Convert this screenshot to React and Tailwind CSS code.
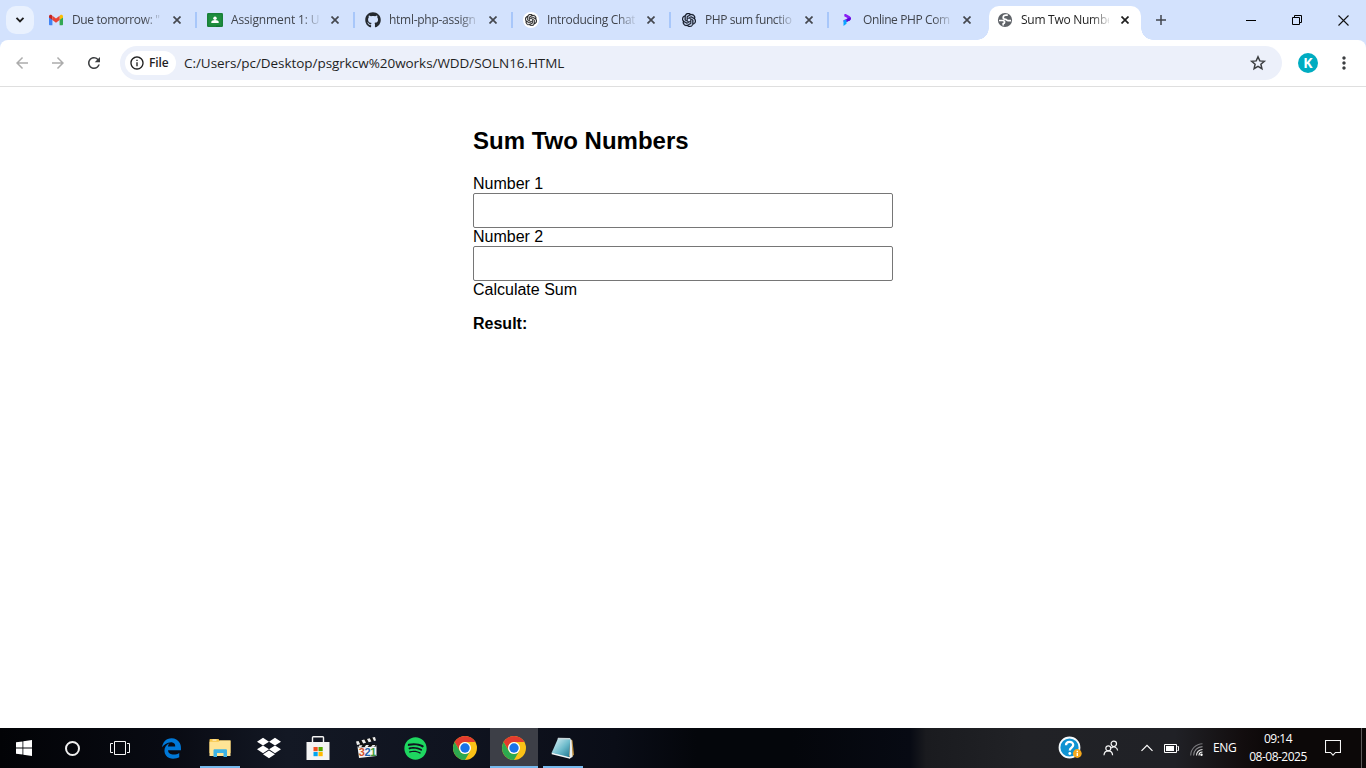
import { MdArrowBack, MdArrowForward, MdRefresh, MdInfoOutline, MdMoreVert } from "react-icons/md";
import { SiOpenai } from "react-icons/si";
import { FaEdgeLegacy, FaGithub, FaDropbox, FaSpotify } from "react-icons/fa6";

function Gmail() {
  return (
    <svg viewBox="0 0 16 16" className="size-4">
      <path d="M0 5v7.2c0 .7.5 1.1 1.1 1.1h2.3V7.2z" fill="#4285f4" />
      <path d="M14 5v7.2c0 .7-.5 1.1-1.1 1.1h-2.3V7.2z" fill="#34a853" />
      <path d="M0 4.4v1L3.4 8V4L2.6 3.1C1.500 2.300 0 3 0 4.400z" fill="#c5221f" />
      <path d="M14 4.400v1L10.600 8V4l.8-.9C12.500 2.300 14 3 14 4.400z" fill="#fbbc04" />
      <path d="M3.4 3.700 7 6.500l3.600-2.800V8L7 10.700 3.400 8z" fill="#ea4335" />
    </svg>
  );
}

function Classroom() {
  return (
    <svg viewBox="0 0 16 16" className="size-4">
      <rect y="1" width="16" height="14" rx="1.200" fill="#188038" />
      <rect x="1.500" y="2.500" width="13" height="11" fill="#1e8e3e" />
      <circle cx="8" cy="6.200" r="1.700" fill="#fff" />
      <path d="M4.300 11V10c0-1.200 2-1.900 3.700-1.900s3.700.7 3.700 1.900v1z" fill="#fff" />
      <path d="M9 13.500h4v1.500H9z" fill="#137333" />
    </svg>
  );
}

function Programiz() {
  return (
    <svg viewBox="0 0 16 16" className="size-4">
      <path d="M5.500 2h1.300l4 2.300c1.500 1 1.600 2.900.2 3.900L8 9.800H4.500V8.200L8.800 6.300 5.200 4.200z" fill="#8a1cf5" />
      <path d="M8.800 6.300 11.800 5.500c.2 1.200 0 2.100-.8 2.700L8 9.800H5.500z" fill="#5a0bd8" />
      <path d="M4.500 8.300 7.500 8v3.800L4.500 14z" fill="#0aa5ff" />
    </svg>
  );
}

function Globe() {
  return (
    <svg viewBox="0 0 16 16" className="size-4">
      <circle cx="8" cy="8" r="7.100" fill="#5f6368" />
      <path d="M10.800 3.200H9C7.200 3.200 6.200 4 6.200 5.400S7.500 7.300 8.700 7.400c1 .1 1.300 1.200 2.300 1.200h3" fill="none" stroke="#fff" strokeWidth="1.700" />
      <path d="M2 8.500h3.600c1.400 0 2 .7 2 1.700s-.8 1.300-1.400 1.400v1.900" fill="none" stroke="#fff" strokeWidth="1.700" />
    </svg>
  );
}

function Star() {
  return (
    <svg viewBox="0 0 18 18" className="ml-auto mr-[15px] size-[18px]">
      <path
        d="M9 2.800l1.800 4.100 4.500.4-3.400 2.950 1 4.400L9 12.300l-3.900 2.350 1-4.400L2.700 7.300l4.500-.4z"
        fill="none"
        stroke="#3c3e41"
        strokeWidth="1.500"
      />
    </svg>
  );
}

function Close({ dark }) {
  return (
    <svg viewBox="0 0 8 8" className="size-2 shrink-0">
      <path d="M.5.5l7 7m0-7l-7 7" stroke={dark ? "#1f1f1f" : "#45484f"} strokeWidth="1.700" />
    </svg>
  );
}

function OpenAIRound() {
  return (
    <span className="flex size-4 items-center justify-center rounded-full bg-white">
      <SiOpenai className="size-3 text-[#222]" stroke="currentColor" strokeWidth="0.6" />
    </span>
  );
}

const tabs = [
  { icon: <Gmail />, title: 'Due tomorrow: "', look: "tracking-[-0.37px]" },
  { icon: <Classroom />, title: "Assignment 1: U", look: "pl-px tracking-[-0.14px]" },
  { icon: <FaGithub className="size-4 text-[#24292f]" />, title: "html-php-assign", look: "pl-px tracking-[-0.27px]" },
  { icon: <OpenAIRound />, title: "Introducing Chat", look: "pl-px tracking-[-0.32px]" },
  { icon: <SiOpenai className="ml-px size-3.5 text-[#111827]" stroke="currentColor" strokeWidth="0.6" />, title: "PHP sum functio", look: "pl-px tracking-[-0.42px]" },
  { icon: <Programiz />, title: "Online PHP Com", look: "pl-px tracking-[-0.4px]" },
];

function TabBody({ icon, title, look, active }) {
  return (
    <>
      <span className="flex size-4 shrink-0 items-center">{icon}</span>
      <span
        className={
          "ml-[7px] w-[89px] shrink-0 whitespace-nowrap text-[12px] leading-4 [mask-image:linear-gradient(to_right,#000_80%,#0002)] " +
          look +
          (active ? " text-[#1f1f1f]" : " text-[#41454d]")
        }
      >
        {title}
      </span>
      <span className="ml-3 flex">
        <Close dark={active} />
      </span>
    </>
  );
}

function TabStrip() {
  return (
    <div className="flex h-10 bg-[#d3e2fd]">
      <button className="ml-1.5 mt-1.5 flex size-7 items-center justify-center rounded-[10px] bg-[#e9f1fe]">
        <svg viewBox="0 0 10 6" className="h-1.5 w-2.5">
          <path d="M1.500 .8 5 4.300 8.500 .8" fill="none" stroke="#1f1f1f" strokeWidth="1.900" />
        </svg>
      </button>
      <div className="ml-1 flex">
        {tabs.map((t, i) => (
          <div key={t.title} className={"flex h-10 items-center pl-[11px] " + (i < 5 ? "w-[158px]" : "w-[149px]")}>
            <TabBody {...t} />
            {i < 5 && <span className="ml-auto mr-[-1px] h-4 w-0.5 bg-[#a8c7fa]" />}
          </div>
        ))}
      </div>
      <span className="size-3 self-end bg-[radial-gradient(circle_at_0_0,#d3e2fd_11.5px,#fff_12px)]" />
      <div className="mt-1.5 flex w-[152px] items-center rounded-t-[10px] bg-white pl-2 pb-1.5">
        <TabBody icon={<Globe />} title="Sum Two Numbe" look="pl-px tracking-[-0.27px]" active />
      </div>
      <span className="size-3 self-end bg-[radial-gradient(circle_at_100%_0,#d3e2fd_11.5px,#fff_12px)]" />
      <svg viewBox="0 0 10 10" className="ml-[3px] mt-[15px] size-2.5">
        <path d="M5 0v10M0 5h10" stroke="#41454d" strokeWidth="1.500" />
      </svg>
      <div className="ml-auto flex h-10 items-center text-black">
        <span className="mr-[36px] h-px w-2.5 bg-black" />
        <svg viewBox="0 0 10 10" className="mr-[36px] size-2.5">
          <path d="M.5 2.500h7v7h-7zM2.500 2.500v-2h7v7h-2" fill="none" stroke="#000" />
        </svg>
        <svg viewBox="0 0 11 11" className="mr-[17px] size-[11px]">
          <path d="M.5.5l10 10m0-10l-10 10" stroke="#111" strokeWidth="1.100" />
        </svg>
      </div>
    </div>
  );
}

function Toolbar() {
  return (
    <div className="bg-[#d3e2fd]">
      <div className="flex h-[47px] items-center rounded-t-lg border-b border-[#dfdfdf] bg-white">
        <MdArrowBack className="ml-[13px] size-[18px] text-[#acacac]" />
        <MdArrowForward className="ml-[18px] size-[18px] text-[#acacac]" />
        <MdRefresh className="ml-[18px] size-[18px] text-[#3c3e41]" />
        <div className="ml-[17px] flex h-[34px] w-[1162px] items-center rounded-full bg-[#ecf0fa]">
          <div className="ml-[5px] flex h-6 w-[51px] items-center rounded-full bg-white">
            <MdInfoOutline className="ml-1 size-4 text-[#1f1f1f]" />
            <span className="ml-1 text-[12px] font-semibold tracking-[-0.1px] text-[#1f1f1f]">File</span>
          </div>
          <span className="ml-2 whitespace-nowrap text-[13.5px] leading-5 tracking-[-0.05px] text-[#1f1f1f]">
            C:/Users/pc/Desktop/psgrkcw%20works/WDD/SOLN16.HTML
          </span>
          <Star />
        </div>
        <span className="ml-4 flex size-5 items-center justify-center rounded-full bg-[#00acc1] text-[14px] leading-5 font-bold text-white">
          K
        </span>
        <MdMoreVert className="ml-4 size-5 text-[#3c3e41]" />
      </div>
    </div>
  );
}

function Page() {
  return (
    <main className="flex-1 bg-white font-['Liberation_Sans',Arial,sans-serif] text-base leading-[18px] text-black">
      <div className="mx-auto w-[420px] pt-10">
        <h2 className="mb-[21px] text-2xl leading-[27px] font-bold">Sum Two Numbers</h2>
        <label className="block">Number 1</label>
        <input className="block h-[35px] w-full rounded-[2px] border border-[#767676] bg-white" />
        <label className="block">Number 2</label>
        <input className="block h-[35px] w-full rounded-[2px] border border-[#767676] bg-white" />
        <div>Calculate Sum</div>
        <div className="mt-4 font-bold">Result:</div>
      </div>
    </main>
  );
}

function ChromeLogo() {
  return (
    <svg viewBox="0 0 24 24" className="size-6">
      <circle cx="12" cy="12" r="12" fill="#fbc116" />
      <path d="M1.610 6A12 12 0 0 1 22.390 6H12A6 6 0 0 0 6.800 15z" fill="#e33b2e" />
      <path d="M1.610 6A12 12 0 0 0 12 24L17.200 15A6 6 0 0 1 6.800 15z" fill="#2da94f" />
      <circle cx="12" cy="12" r="6" fill="#fff" />
      <circle cx="12" cy="12" r="4.700" fill="#1a73e8" />
    </svg>
  );
}

function Explorer() {
  return (
    <svg viewBox="0 0 22 20" className="h-5 w-[22px]">
      <path d="M.5 2c0-.6.3-1 .9-1H9.500l1 1.500H21.500V15H.5z" fill="#f7c64a" />
      <path d="M3.500 1.600h4v.9h-4z" fill="#fff" />
      <path d="M.5 3.700h9l1.500-1.200h10.500V18H.5z" fill="#ffe495" />
      <path d="M4.500 19v-6.500c0-.7.4-1.200 1.200-1.200h11c.8 0 1.300.5 1.300 1.200V19h-3.500v-4H8v4z" fill="#3cb3e6" />
    </svg>
  );
}

function Store() {
  return (
    <svg viewBox="0 0 24 24" className="size-6">
      <path d="M6.500 6V1.500C6.500.9 6.900.7 7.300.7h9.400c.4 0 .8.200.8.800V6" fill="none" stroke="#f4f4f4" strokeWidth="1.400" />
      <path d="M.5 6h23v18h-23z" fill="#f4f4f4" />
      <path d="M7.500 11H11.700v4.200H7.500z" fill="#f25022" />
      <path d="M12.500 11h4.200v4.200h-4.200z" fill="#56a800" />
      <path d="M7.500 16H11.700v4.200H7.500z" fill="#00a4ef" />
      <path d="M12.500 16h4.200v4.200h-4.200z" fill="#ffb900" />
    </svg>
  );
}

function Clapper() {
  return (
    <svg viewBox="0 0 24 24" className="size-6">
      <path d="M2.500 10.500 21.500 9v11L4 22z" fill="#f5f5f5" />
      <path d="M3 8h18.500v2.500L3 11.500z" fill="#111" />
      <path d="M1 5.500 20 1l1 3.500L2 9z" fill="#111" />
      <path d="M1 5.500l2.500-.6 1.700 3.300-3.200.8zM6.500 4.200l2.800-.7 1.700 3.300-2.800.7zM12 2.900l2.800-.7 1.600 3.300-2.700.7zM17.400 1.600l2.600-.6 1 3.500-2 .500zM3 11.500l1.500-2.300h3L6 11.500zM9.500 11.200 11 9h3l-1.500 2.100zM16 11 17.500 9h3L19 10.800z" fill="#eee" />
      <g fontFamily="Liberation Sans, Arial, sans-serif" fontWeight="700" fontSize="11">
        <text x="3.800" y="20.300" fill="#d5532b">3</text>
        <text x="9.600" y="20" fill="#1f62ad">2</text>
        <text x="15.300" y="19.500" fill="#3f9a3c">1</text>
      </g>
    </svg>
  );
}

function Notepad() {
  return (
    <svg viewBox="0 0 24 24" className="size-6">
      <defs>
        <linearGradient id="pad" x1="0" y1="0" x2="1" y2="1">
          <stop offset="0" stopColor="#e4f5f9" />
          <stop offset=".55" stopColor="#6fbccc" />
          <stop offset="1" stopColor="#1d7690" />
        </linearGradient>
      </defs>
      <path d="M19.500 3l2 1.500L23 18.500l-2 2.500-3-1z" fill="#b98b3c" />
      <path d="M18.500 2.500 20.500 4l1 17-3 1.500z" fill="#e8eef0" />
      <path d="M.7 16.500 14 19l5.500 2.500-.5 1.300L.7 18.300z" fill="#f2f5f6" />
      <path d="M7 2.500l12.200.3L18 21 .7 16.700z" fill="url(#pad)" />
      <path d="M7 1.800l12.300.2v1.600L6.500 3.300z" fill="#c8d6da" />
    </svg>
  );
}

function TaskItem({ children, className = "" }) {
  return <div className={"flex h-10 shrink-0 items-center justify-center " + className}>{children}</div>;
}

function Taskbar() {
  return (
    <footer className="flex h-10 items-center bg-[linear-gradient(90deg,#020306_0%,#080a12_12%,#131824_21%,#0f131f_34%,#0a0d17_45%,#04060b_51%,#04060b_58%,#070a13_66.6%,#1a1b1f_67.8%,#212226_75%,#202126_86%,#120d0e_91%,#0c0808_93%,#0c0808_100%)] text-white">
      <TaskItem className="w-12">
        <svg viewBox="0 0 16 16" className="size-4">
          <path d="M0 2.300 6.500 1.400v6.100H0zM7.300 1.300 16 0v7.500H7.300zM0 8.400h6.500v6.200L0 13.700zM7.300 8.400H16V16l-8.700-1.200z" fill="#fff" />
        </svg>
      </TaskItem>
      <TaskItem className="w-12">
        <span className="size-[15px] rounded-full border-[2.5px] border-[#f0f0f0]" />
      </TaskItem>
      <TaskItem className="w-12">
        <svg viewBox="0 0 20 14" className="h-3.5 w-5">
          <path d="M4.500.5h11v13h-11zM3 2.500H.5v9H3M17 2.500h2.500v9H17" fill="none" stroke="#f5f5f5" />
        </svg>
      </TaskItem>
      <TaskItem className="w-14">
        <FaEdgeLegacy className="ml-[-2px] size-[21px] text-[#0078d7]" />
      </TaskItem>
      <TaskItem className="w-10 border-b-2 border-[#76b9ed] pt-0.5">
        <Explorer />
      </TaskItem>
      <TaskItem className="w-[57px]">
        <FaDropbox className="size-6 text-white" />
      </TaskItem>
      <TaskItem className="w-[42px]">
        <Store />
      </TaskItem>
      <TaskItem className="w-[56px]">
        <Clapper />
      </TaskItem>
      <TaskItem className="w-[41px]">
        <FaSpotify className="size-[23px] text-[#1ed760]" />
      </TaskItem>
      <TaskItem className="w-[54px] pl-1">
        <ChromeLogo />
      </TaskItem>
      <TaskItem className="w-12 border-b-2 border-[#76b9ed] bg-[#3d3f47] pt-0.5">
        <ChromeLogo />
      </TaskItem>
      <TaskItem className="ml-[5px] w-10 border-b-2 border-[#76b9ed] pt-0.5">
        <Notepad />
      </TaskItem>
      <div className="ml-[475px] flex h-10 items-center">
        <svg viewBox="0 0 24 24" className="size-6">
          <circle cx="11.500" cy="11.500" r="10" fill="#0e93d2" stroke="#f5fafc" strokeWidth="1.800" />
          <path d="M8 9.300c0-4.400 7.200-4.400 7.200-.3 0 2.500-3.400 2.600-3.400 5.400" fill="none" stroke="#fff" strokeWidth="2.300" />
          <circle cx="11.800" cy="17.500" r="1.400" fill="#fff" />
          <circle cx="19.300" cy="17.500" r="4.400" fill="#f5a81c" />
          <path d="M19.300 14.700v1.300m0 .7v3.400" stroke="#fff" strokeWidth="1.400" />
        </svg>
        <svg viewBox="0 0 16 16" className="ml-[21px] size-4">
          <g fill="none" stroke="#f5f5f5" strokeWidth="1.200">
            <circle cx="10.800" cy="3.800" r="2.700" />
            <circle cx="5.300" cy="8.300" r="2.500" />
            <path d="M1 15.300c.3-6 8.300-6 8.600 0M8.300 8c2.500-2.300 6-.6 6.300 2.500" />
          </g>
        </svg>
        <svg viewBox="0 0 12 8" className="ml-[22px] h-2 w-3">
          <path d="M.5 6.800 6 1.300l5.500 5.500" fill="none" stroke="#fff" strokeWidth="1.200" />
        </svg>
        <svg viewBox="0 0 15 9" className="ml-[11px] h-[9px] w-[15px]">
          <path d="M.5.5h12v8H.5zM13.500 2.500h1v4h-1" fill="none" stroke="#fff" />
          <path d="M2 2h8v5H2z" fill="#fff" />
        </svg>
        <svg viewBox="0 0 13 13" className="ml-[11px] mt-0.5 size-[13px]">
          <g fill="none" strokeWidth="1.100">
            <path d="M.7 12.500A12 12 0 0 1 12.500.7" stroke="#77777b" />
            <path d="M3.600 12.500A9 9 0 0 1 12.500 3.600" stroke="#8b8b8e" />
            <path d="M6.500 12.500a6 6 0 0 1 6-6" stroke="#ddd" />
            <path d="M9 12.500A3.500 3.500 0 0 1 12.500 9" stroke="#fff" />
          </g>
          <circle cx="11.500" cy="11.700" r="1.200" fill="#fff" />
        </svg>
        <span className="ml-[10px] w-[25px] whitespace-nowrap text-[12px] tracking-[-0.4px]">ENG</span>
        <div className="ml-2 flex w-[64px] flex-col items-center whitespace-nowrap text-[12px] leading-[18px] tracking-[-0.5px]">
          <span>09:14</span>
          <span>08-08-2025</span>
        </div>
        <svg viewBox="0 0 16 17" className="ml-[15px] h-[17px] w-4">
          <path d="M.5.5h15v12h-5L8 15.200 5.500 12.500h-5z" fill="none" stroke="#f5f5f5" strokeWidth="1.100" />
        </svg>
        <span className="ml-5 h-10 w-px bg-[#5c5a5a]" />
      </div>
    </footer>
  );
}

export default function App() {
  return (
    <div className="flex h-screen w-screen flex-col overflow-hidden font-['Open_Sans','Noto_Sans',sans-serif]">
      <TabStrip />
      <Toolbar />
      <Page />
      <Taskbar />
    </div>
  );
}
